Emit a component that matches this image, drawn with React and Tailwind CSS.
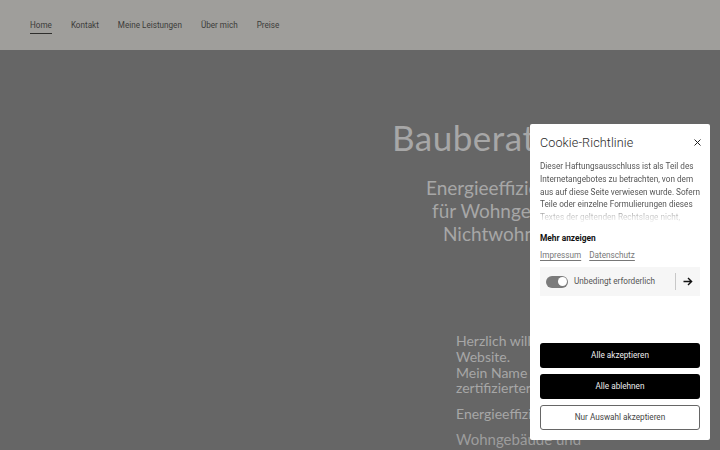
import React from "react";

export default function App() {
  const nav = ["Home", "Kontakt", "Meine Leistungen", "Über mich", "Preise"];
  return (
    <div className="relative w-[720px] h-[450px] overflow-hidden bg-[#666666] font-['Roboto',sans-serif]">
      <header className="h-[50px] bg-[#9f9e9b] flex items-center pl-[30px] gap-[19px]">
        {nav.map((n, i) => (
          <span
            key={n}
            className={
              "text-[8.15px] leading-[12px] text-[#3c3c3a] " +
              (i === 0 ? "border-b border-[#2e2e2c] pb-[2px] mt-[3px]" : "")
            }
          >
            {n}
          </span>
        ))}
      </header>

      <main className="font-['Lato',sans-serif] text-[#a7a7a7]">
        <div className="pt-[66px] pl-[392px] text-[35px] leading-[42px] whitespace-nowrap tracking-[0.5px]">
          Bauberatung
        </div>
        <div className="mt-[18px] text-[19px] leading-[23px] whitespace-nowrap">
          <div className="pl-[426px]">Energieeffizienzberatung</div>
          <div className="pl-[432px]">für Wohngebäude und</div>
          <div className="pl-[443px]">Nichtwohngebäude</div>
        </div>
        <div className="mt-[88px] pl-[456px] text-[14px] leading-[15.8px] whitespace-nowrap">
          <p>Herzlich willkommen auf meiner<br />Website.</p>
          <p>Mein Name ist Max Mustermann,<br />zertifizierter gebäudeenergieberater.</p>
          <p className="mt-[10px]">Energieeffizienz-Expertin</p>
          <p className="mt-[10px] text-[15px] text-[#9d9d9d]">Wohngebäude und<br />Nichtwohngebäude</p>
        </div>
      </main>

      <div className="absolute left-[530px] top-[124px] w-[180px] h-[316px] bg-white rounded-[2px] px-[10px] flex flex-col">
        <div className="flex items-start justify-between pt-[11px]">
          <h2 className="text-[12.6px] leading-[16px] font-light text-[#2a2a2a] tracking-[0.1px]">Cookie-Richtlinie</h2>
          <svg width="7" height="7" viewBox="0 0 7 7" className="mt-[4px] mr-[-1px]">
            <path d="M0.5 0.5L6.5 6.5M6.5 0.5L0.5 6.5" stroke="#222" strokeWidth="1" />
          </svg>
        </div>
        <p className="mt-[9px] h-[64px] overflow-hidden text-[8.2px] leading-[12.75px] text-[#555] [mask-image:linear-gradient(to_bottom,black_72%,rgba(0,0,0,0.3)_88%,transparent)]">
          Dieser Haftungsausschluss ist als Teil des Internetangebotes zu betrachten, von dem aus auf diese Seite verwiesen wurde. Sofern Teile oder einzelne Formulierungen dieses Textes der geltenden Rechtslage nicht, nicht mehr oder nicht vollständig entsprechen sollten.
        </p>
        <div className="mt-[8px] text-[8.4px] leading-[12px] font-bold text-[#111]">Mehr anzeigen</div>
        <div className="mt-[5px] flex gap-[8px] text-[8.2px] leading-[12px] text-[#777]">
          <span className="underline underline-offset-2">Impressum</span>
          <span className="underline underline-offset-2">Datenschutz</span>
        </div>
        <div className="mt-[6px] h-[29px] bg-[#f6f6f6] flex items-center pl-[6px] pr-[7px]">
          <div className="w-[22px] h-[12px] rounded-full bg-[#7b7b7b] flex items-center justify-end pr-[1.5px]">
            <div className="w-[9px] h-[9px] rounded-full bg-white" />
          </div>
          <span className="ml-[6px] text-[8.2px] text-[#555] flex-1">Unbedingt erforderlich</span>
          <div className="w-px h-[17px] bg-[#c8c8c8] mr-[7px]" />
          <svg width="10" height="9" viewBox="0 0 10 9">
            <path d="M0.5 4.5H8.5M5 1L8.6 4.5L5 8" stroke="#111" strokeWidth="1.4" fill="none" />
          </svg>
        </div>
        <div className="mt-[47px] flex flex-col gap-[6px] text-[8.2px]">
          <button className="h-[25px] rounded-[3px] bg-black text-[#eee]">Alle akzeptieren</button>
          <button className="h-[25px] rounded-[3px] bg-black text-[#eee]">Alle ablehnen</button>
          <button className="h-[25px] rounded-[3px] border border-[#666] text-[#444] bg-white">Nur Auswahl akzeptieren</button>
        </div>
      </div>
    </div>
  );
}
